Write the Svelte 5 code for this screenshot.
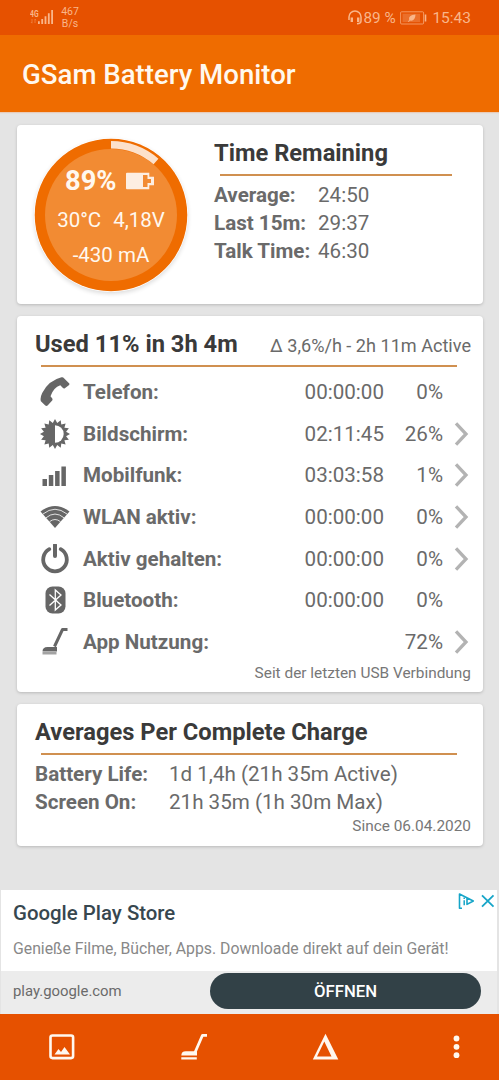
<script>
  const remaining = [
    { label: "Average:", value: "24:50" },
    { label: "Last 15m:", value: "29:37" },
    { label: "Talk Time:", value: "46:30" },
  ];

  const usage = [
    { icon: "phone", label: "Telefon:", time: "00:00:00", percent: "0%" },
    { icon: "screen", label: "Bildschirm:", time: "02:11:45", percent: "26%", more: true },
    { icon: "signal", label: "Mobilfunk:", time: "03:03:58", percent: "1%", more: true },
    { icon: "wifi", label: "WLAN aktiv:", time: "00:00:00", percent: "0%", more: true },
    { icon: "power", label: "Aktiv gehalten:", time: "00:00:00", percent: "0%", more: true },
    { icon: "bluetooth", label: "Bluetooth:", time: "00:00:00", percent: "0%" },
    { icon: "vacuum", label: "App Nutzung:", time: "", percent: "72%", more: true },
  ];

  const averages = [
    { label: "Battery Life:", value: "1d 1,4h (21h 35m Active)" },
    { label: "Screen On:", value: "21h 35m (1h 30m Max)" },
  ];

  // 16 spikes around the brightness icon
  const star = Array.from({ length: 32 }, (_, i) => {
    const r = i % 2 ? 11.3 : 15;
    const a = (i * Math.PI) / 16;
    return `${(15 + r * Math.sin(a)).toFixed(2)},${(15 - r * Math.cos(a)).toFixed(2)}`;
  }).join(" ");
</script>

<div class="app">
  <div class="status">
    <svg class="network" width="26" height="20" viewBox="0 0 26 20">
      <text x="0" y="7.5" font-size="9" font-weight="700" textLength="8.5" lengthAdjust="spacingAndGlyphs">4G</text>
      <path d="M2 10v4M1 13l1 1.3M5 14v-4M5 10l1 1.3" stroke="currentColor" stroke-width=".8" opacity=".5" />
      <path d="M8 12.3h1.8V15H8zM11.3 10h1.8v5h-1.8zM14.6 7.2h1.8V15h-1.8zM17.9 4.2h1.8V15h-1.8zM21.2 1h1.8v14h-1.8z" fill="currentColor" />
    </svg>
    <div class="speed">467<br />B/s</div>
    <div class="right">
      <svg width="14" height="15" viewBox="0 0 14 15" fill="none" stroke="currentColor">
        <path d="M1 10V7a6 6 0 0 1 12 0v4q0 2.5-4 2.7" stroke-width="1.5" />
        <path d="M3.8 7.5V12M10.2 7.5V12" stroke-width="2.4" />
      </svg>
      <span class="level">89 %</span>
      <svg class="batt" width="27" height="14" viewBox="0 0 27 14">
        <rect x=".6" y=".8" width="23" height="12.2" rx="1" fill="none" stroke="currentColor" opacity=".7" />
        <rect x="2.5" y="2.7" width="17.5" height="8.4" fill="currentColor" opacity=".3" />
        <path d="M8 10.5l1.2-1.6Q7.8 4.2 15.5 3.6Q15.2 10.5 9.9 9.5L8.8 11z" fill="currentColor" />
        <path d="M25.5 3.5v7" stroke="currentColor" stroke-width="1.6" />
      </svg>
      <span class="clock">15:43</span>
    </div>
  </div>

  <header><h1>GSam Battery Monitor</h1></header>

  <main>
    <section class="card summary">
      <div class="gauge">
        <svg class="ring" width="154" height="154" viewBox="0 0 154 154">
          <circle cx="77" cy="77" r="76.3" fill="#ef6c00" />
          <circle cx="77" cy="77" r="66" fill="#f28b33" />
          <path d="M77 6.8A70.2 70.2 0 0 1 122 23.5" fill="none" stroke="#fce1cb" stroke-width="7.5" />
        </svg>
        <div class="readings">
          <div class="charge">
            <b>89%</b>
            <svg width="29" height="18" viewBox="0 0 29 18">
              <path d="M1 .8h22.3v4H28v8.400h-4.700v4H1q-1 0-1-1V1.800q0-1 1-1z" fill="#fdeee2" />
              <path d="M17 3h4.500v4h3.500v4h-3.500v4H17z" fill="#f28b33" />
            </svg>
          </div>
          <div class="temp"><span>30°C</span><span>4,18V</span></div>
          <div class="current">-430 mA</div>
        </div>
      </div>
      <div class="remaining">
        <h2>Time Remaining</h2>
        <hr />
        <dl>
          {#each remaining as item}
            <dt>{item.label}</dt>
            <dd>{item.value}</dd>
          {/each}
        </dl>
      </div>
    </section>

    <section class="card used">
      <div class="title">
        <h2>Used 11% in 3h 4m</h2>
        <span>Δ 3,6%/h - 2h 11m Active</span>
      </div>
      <hr />
      <ul>
        {#each usage as item}
          <li>
            <svg class="icon" width="30" height="30" viewBox="0 0 30 30">
              {#if item.icon === "phone"}
                <path d="M21.5 .3Q23 -.2 24 1.2L29.3 6.500Q29.700 7.500 28.800 8.300L24.500 11.500Q23.500 11.800 22.700 10.800L20.300 8.300Q13.500 10.500 10.500 19.300L12.300 21.500Q12.800 22.500 12.200 23.400L7.600 28.500Q6.500 29.400 5.300 28.600L.9 24.300Q-.2 21 2.200 16Q8.500 3.500 21.500 .3z" />
              {:else if item.icon === "screen"}
                <polygon points={star} />
                <path d="M15 6.3a8.7 8.7 0 0 1 0 17.4z" fill="#fff" />
              {:else if item.icon === "signal"}
                <path d="M2.500 19h4.500v7H2.500zM8.800 15h4.500v11H8.800zM15.100 11h4.500v15h-4.500zM21.400 6.500h4.500V26h-4.500z" />
              {:else if item.icon === "wifi"}
                <path d="M.5 9.500Q15-1.500 29.500 9.500L15 26z" />
                <path d="M3 12Q15 2.500 27 12M6 15.800Q15 8.300 24 15.800M9.500 19.700Q15 15.300 20.500 19.700" fill="none" stroke="#fff" stroke-width=".8" />
              {:else if item.icon === "power"}
                <path d="M9.300 5.200A11.800 11.800 0 1 0 20.700 5.200" fill="none" stroke="#666" stroke-width="3.800" stroke-linecap="round" />
                <path d="M15 1v11" stroke="#666" stroke-width="4" stroke-linecap="round" />
              {:else if item.icon === "bluetooth"}
                <rect x="5.500" y="1.500" width="20" height="27" rx="7" />
                <path d="M9.500 9.500L21 20l-5.700 5V5l5.700 5L9.500 20.500" fill="none" stroke="#fff" stroke-width="1.300" />
              {:else}
                <path d="M27.500 2.500h-5l-8 17" fill="none" stroke="#666" stroke-width="3" stroke-linejoin="round" />
                <path d="M2.500 24.500q0-4.500 5-4.500H17v4.500z" />
                <path d="M2.500 25h14v2.500h-14z" opacity=".6" />
              {/if}
            </svg>
            <b>{item.label}</b>
            <span class="time">{item.time}</span>
            <span class="percent">{item.percent}</span>
            {#if item.more}
              <svg class="more" width="16" height="26" viewBox="0 0 16 26">
                <path d="M3 2.300L13 13L3 23.700" fill="none" stroke="#b3b3b3" stroke-width="3.300" />
              </svg>
            {/if}
          </li>
        {/each}
      </ul>
      <small>Seit der letzten USB Verbindung</small>
    </section>

    <section class="card averages">
      <h2>Averages Per Complete Charge</h2>
      <hr />
      <dl>
        {#each averages as item}
          <dt>{item.label}</dt>
          <dd>{item.value}</dd>
        {/each}
      </dl>
      <small>Since 06.04.2020</small>
    </section>
  </main>

  <aside>
    <div class="ad">
      <h3>Google Play Store</h3>
      <p>Genieße Filme, Bücher, Apps. Downloade direkt auf dein Gerät!</p>
      <svg class="choices" width="38" height="18" viewBox="0 0 38 18" fill="none" stroke="#16a5c8">
        <path d="M4 16.300H1.500V2L15.300 9L9 12.400V6.500" stroke-width="1.600" stroke-linejoin="round" />
        <path d="M6.200 8.300v5M6.200 5.500v1.500" stroke-width="1.500" />
        <path d="M24 3.300L35.500 14.700M35.500 3.300L24 14.700" stroke-width="1.800" />
      </svg>
    </div>
    <div class="action">
      <span>play.google.com</span>
      <button>ÖFFNEN</button>
    </div>
  </aside>

  <nav>
    <svg width="28" height="28" viewBox="0 0 28 28">
      <rect x="2.500" y="2.500" width="22.600" height="22.600" rx="2" fill="none" stroke="#fff8ef" stroke-width="2.600" />
      <path d="M6.500 21.500l4-5.500 2.500 3 3.500-5 5.500 7.500z" fill="#fff8ef" />
    </svg>
    <svg width="28" height="28" viewBox="0 0 28 28">
      <path d="M27 2.300h-4.500L15 19.500" fill="none" stroke="#fff8ef" stroke-width="2.800" stroke-linejoin="round" />
      <path d="M1.300 22.500q0-4.300 4.500-4.300H17v4.300zM1.300 24.200h15.500v2.200H1.300z" fill="#fff8ef" />
    </svg>
    <svg width="28" height="28" viewBox="0 0 28 28">
      <path d="M14.500 .8L27.300 26.500H1.800zM13.300 8.500L6 23.500h14.500z" fill="#fff8ef" fill-rule="evenodd" />
    </svg>
    <svg width="28" height="28" viewBox="0 0 28 28" fill="#fff8ef">
      <circle cx="13.500" cy="5.500" r="2.900" />
      <circle cx="13.500" cy="13.800" r="2.900" />
      <circle cx="13.500" cy="22.200" r="2.900" />
    </svg>
  </nav>
</div>

<style>
  :global(body) {
    margin: 0;
    background: #e4e4e4;
  }
  .app {
    display: flex;
    flex-direction: column;
    width: 499px;
    height: 1080px;
    overflow: hidden;
    background: #e4e4e4;
    color: #6a6a6a;
    font-family: Roboto, sans-serif;
  }
  svg {
    display: block;
    flex: none;
  }
  h1,
  h2,
  h3,
  p,
  dl,
  dd,
  ul {
    margin: 0;
    padding: 0;
  }
  .status {
    display: flex;
    height: 35px;
    box-sizing: border-box;
    padding: 0 28px 0 30px;
    background: #e65100;
    color: #f9b68a;
  }
  .network {
    margin-top: 9px;
    fill: currentColor;
  }
  .speed {
    width: 28px;
    margin-top: 6px;
    font-size: 10.5px;
    line-height: 12px;
    text-align: center;
  }
  .right {
    display: flex;
    align-items: center;
    margin-left: auto;
    font-size: 15.5px;
  }
  .level {
    width: 35px;
    margin-left: 1px;
    font-size: 15.3px;
    white-space: nowrap;
  }
  .batt {
    margin: 0 5px 0 2px;
  }
  header {
    height: 77px;
    background: #ef6c00;
    box-shadow: 0 1px 1px #e8cbb8;
  }
  h1 {
    padding-left: 22px;
    color: #fff8ef;
    font-size: 27.6px;
    font-weight: 500;
    line-height: 80px;
  }
  main {
    display: flex;
    flex-direction: column;
    gap: 12px;
    padding: 13px 16px 0 17px;
    flex: 1;
  }
  .card {
    box-sizing: border-box;
    background: #fff;
    border-radius: 4px;
    box-shadow: 0 1px 3px #b8b8b8;
  }
  h2 {
    color: #3a3a3a;
    font-size: 23.7px;
    font-weight: 700;
    line-height: 28px;
    white-space: nowrap;
  }
  hr {
    height: 2px;
    margin: 0;
    border: 0;
    background: #d09050;
  }
  dl {
    display: grid;
    font-size: 20.6px;
    line-height: 28px;
    white-space: nowrap;
  }
  dt,
  b {
    font-weight: 700;
  }
  small {
    display: block;
    font-size: 15.4px;
    line-height: 18px;
    text-align: right;
    color: #777;
  }
  .summary {
    display: flex;
    height: 179px;
    padding: 13px 0 0 17px;
  }
  .gauge {
    display: grid;
    width: 154px;
    height: 154px;
    color: #fff8ef;
  }
  .ring {
    border-radius: 50%;
    box-shadow: 0 2px 4px #ddd;
  }
  .ring,
  .readings {
    grid-area: 1 / 1;
  }
  .readings {
    padding-top: 28px;
    font-size: 20.5px;
    text-align: center;
  }
  .charge {
    display: flex;
    align-items: center;
    gap: 9px;
    padding-left: 31px;
    font-size: 27.3px;
    line-height: 30px;
  }
  .temp {
    display: flex;
    justify-content: center;
    gap: 12px;
    margin-top: 10px;
    line-height: 28px;
  }
  .current {
    margin-top: 7px;
    line-height: 28px;
  }
  .remaining {
    padding: 1px 0 0 26px;
  }
  .remaining hr {
    width: 232px;
    margin: 7px 0 5px 6px;
  }
  .remaining dl {
    grid-template-columns: 104px auto;
  }
  .used {
    height: 376px;
    padding: 14px 12px 0 18px;
  }
  .title {
    display: flex;
    justify-content: space-between;
    align-items: baseline;
    font-size: 18.1px;
    white-space: nowrap;
  }
  .used hr,
  .averages hr {
    margin: 7px 14px 0 6px;
  }
  ul {
    margin-top: 4.4px;
    list-style: none;
    font-size: 20.6px;
  }
  li {
    display: grid;
    grid-template-columns: 48px 176px 125px 59px 26px;
    align-items: center;
    height: 41.6px;
  }
  .icon {
    margin-left: 5px;
    fill: #666;
  }
  .time,
  .percent {
    text-align: right;
  }
  .more {
    margin-left: 10px;
  }
  .used small {
    margin-top: 1px;
  }
  .averages {
    height: 142px;
    padding: 14px 12px 0 18px;
  }
  .averages dl {
    grid-template-columns: 134px auto;
    margin-top: 5px;
  }
  .averages small {
    margin-top: 1px;
  }
  aside {
    height: 124px;
    padding: 0 2px 0 1px;
  }
  .ad {
    position: relative;
    height: 81px;
    box-sizing: border-box;
    padding: 11px 12px 0;
    background: #fff;
  }
  h3 {
    color: #37474f;
    font-size: 20.4px;
    font-weight: 500;
    line-height: 24px;
  }
  p {
    margin-top: 13px;
    color: #888;
    font-size: 15.8px;
    line-height: 22px;
    white-space: nowrap;
  }
  .choices {
    position: absolute;
    top: 2px;
    right: 1px;
  }
  .action {
    display: flex;
    justify-content: space-between;
    height: 43px;
    box-sizing: border-box;
    padding: 2px 16px 5px 12px;
    background: #ececec;
    font-size: 14.9px;
    line-height: 36px;
  }
  button {
    width: 271px;
    height: 36px;
    padding: 0;
    border: 0;
    border-radius: 18px;
    background: #324147;
    color: #fff;
    font: 500 16.7px Roboto, sans-serif;
  }
  nav {
    display: flex;
    align-items: center;
    justify-content: space-between;
    height: 66px;
    box-sizing: border-box;
    padding: 0 28px 0 48px;
    background: #e65100;
  }
</style>
